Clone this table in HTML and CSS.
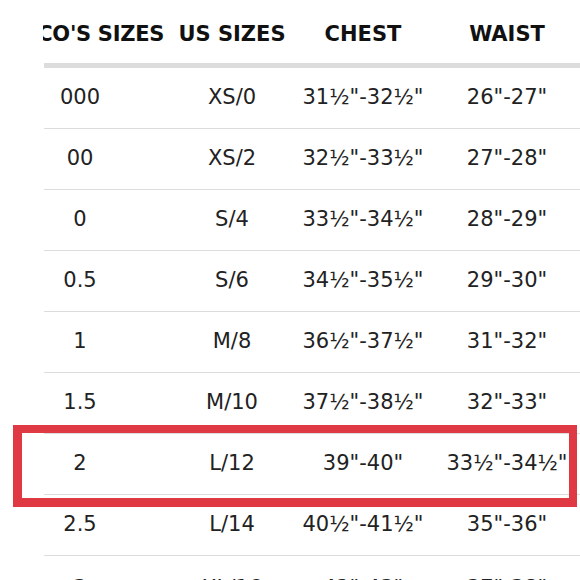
FILE: index.html
```html
<!DOCTYPE html>
<html>
<head>
<meta charset="utf-8">
<link rel="stylesheet" href="styles.css">
</head>
<body>
<div class="chart">
  <div class="row head"><div class="cell first">CO'S SIZES</div><div class="cell">US SIZES</div><div class="cell">CHEST</div><div class="cell">WAIST</div></div>
  <div class="row"><div class="cell">000</div><div class="cell">XS/0</div><div class="cell">31½"-32½"</div><div class="cell">26"-27"</div></div>
  <div class="row"><div class="cell">00</div><div class="cell">XS/2</div><div class="cell">32½"-33½"</div><div class="cell">27"-28"</div></div>
  <div class="row"><div class="cell">0</div><div class="cell">S/4</div><div class="cell">33½"-34½"</div><div class="cell">28"-29"</div></div>
  <div class="row"><div class="cell">0.5</div><div class="cell">S/6</div><div class="cell">34½"-35½"</div><div class="cell">29"-30"</div></div>
  <div class="row"><div class="cell">1</div><div class="cell">M/8</div><div class="cell">36½"-37½"</div><div class="cell">31"-32"</div></div>
  <div class="row"><div class="cell">1.5</div><div class="cell">M/10</div><div class="cell">37½"-38½"</div><div class="cell">32"-33"</div></div>
  <div class="row hl"><div class="cell">2</div><div class="cell">L/12</div><div class="cell">39"-40"</div><div class="cell">33½"-34½"</div></div>
  <div class="row"><div class="cell">2.5</div><div class="cell">L/14</div><div class="cell">40½"-41½"</div><div class="cell">35"-36"</div></div>
  <div class="row last"><div class="cell">3</div><div class="cell">XL/16</div><div class="cell">42"-43"</div><div class="cell">37"-38"</div></div>
</div>
</body>
</html>
```
FILE: styles.css
```css
html, body {
  margin: 0;
  padding: 0;
  background: #fff;
  overflow: hidden;
  width: 580px;
  height: 580px;
}
.chart {
  width: 592px;
  font-family: "DejaVu Sans", sans-serif;
  color: #222;
}
.row {
  display: grid;
  grid-template-columns: 160px 144px 118px 170px;
  height: 61px;
  font-size: 21px;
  background: linear-gradient(#dcdcdc, #dcdcdc) no-repeat;
  background-position: 44px 100%;
  background-size: 100% 1px;
  position: relative;
}
.row .cell {
  display: flex;
  justify-content: center;
  align-items: center;
  white-space: nowrap;
  padding-bottom: 4px;
}
.row.last .cell {
  padding-top: 6px;
}
.head {
  height: 68px;
  font-size: 21px;
  font-weight: bold;
  color: #111;
  background-size: 100% 5px;
}
.head .cell {
  padding-bottom: 0;
}
.head .first {
  justify-content: flex-end;
  margin-left: 43px;
  margin-right: -4px;
  overflow: hidden;
  letter-spacing: -0.3px;
}
.hl::after {
  content: "";
  position: absolute;
  left: 13px;
  right: 15px;
  top: -9px;
  bottom: -12px;
  border: 9px solid #df3a43;
  border-width: 8px 8px 9px 9px;
}
```
